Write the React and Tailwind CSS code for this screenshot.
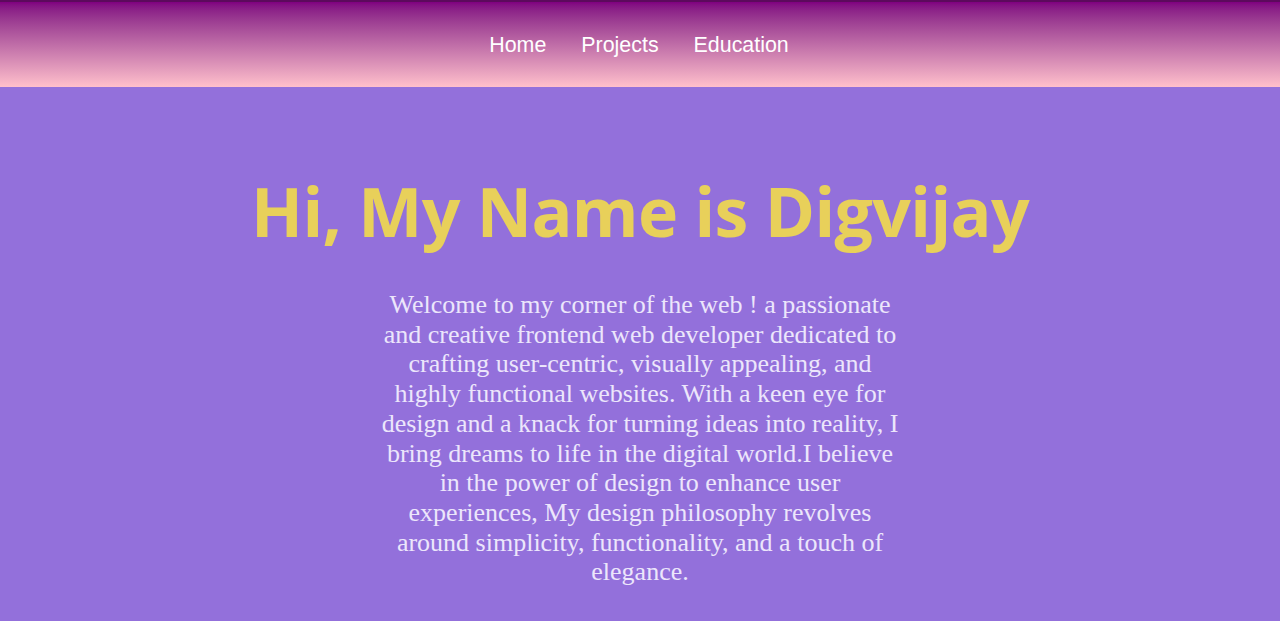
import React from 'react';

const links = ['Home', 'Projects', 'Education'];

const App = () => {
  return (
    <div className="min-h-screen bg-[#9370db]">
      <header className="h-[87px] border-t-2 border-[#5c0a5c] bg-gradient-to-b from-[#800080] to-[#ffc0cb] flex items-center justify-center">
        <nav className="flex items-center gap-[35px] pt-[2px] pr-[2px] font-['Liberation_Sans',Arial,sans-serif] text-[21.4px] text-white">
          {links.map((l) => (
            <a key={l} href="#" className="leading-none">
              {l}
            </a>
          ))}
        </nav>
      </header>

      <main className="flex flex-col items-center pt-[90px]">
        <h1 className="font-['Open_Sans',sans-serif] font-bold text-[68px] leading-none tracking-[-0.65px] text-[#e8d05a]">
          Hi, My Name is Digvijay
        </h1>
        <p className="mt-[45px] w-[520px] text-center font-['Liberation_Serif','Times_New_Roman',serif] text-[26px] leading-[29.7px] text-[#ece6fb]">
          Welcome to my corner of the web ! a passionate and creative frontend web developer dedicated to crafting user-centric, visually appealing, and highly functional websites. With a keen eye for design and a knack for turning ideas into reality, I bring dreams to life in the digital world.I believe in the power of design to enhance user experiences, My design philosophy revolves around simplicity, functionality, and a touch of elegance.
        </p>
      </main>
    </div>
  );
};

export default App;
